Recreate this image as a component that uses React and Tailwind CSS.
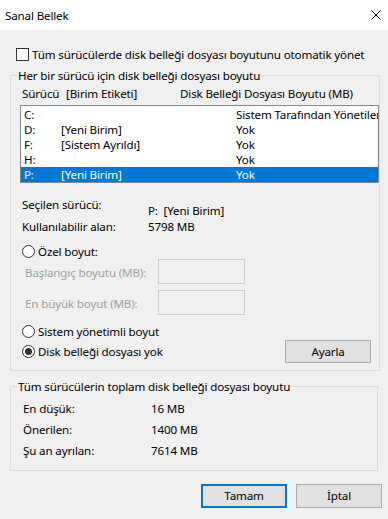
import React, { useState } from "react";

const drives = [
    { letter: "C:", label: "", size: "Sistem Tarafından Yönetilen" },
    { letter: "D:", label: "[Yeni Birim]", size: "Yok" },
    { letter: "F:", label: "[Sistem Ayrıldı]", size: "Yok" },
    { letter: "H:", label: "", size: "Yok" },
    { letter: "P:", label: "[Yeni Birim]", size: "Yok" },
];

const Radio = ({ checked, label, onClick }) => (
    <label className="flex items-center h-[15px] cursor-default" onClick={onClick}>
        <span className="w-[13px] h-[13px] rounded-full border border-[#333333] bg-white flex items-center justify-center shrink-0">
            {checked && <span className="w-[7px] h-[7px] rounded-full bg-[#333333]" />}
        </span>
        <span className="ml-[3px]">{label}</span>
    </label>
);

export default function App() {
    const [selected, setSelected] = useState(4);
    const [mode, setMode] = useState("none");
    const [auto, setAuto] = useState(false);

    return (
        <div className="w-[388px] h-[519px] bg-[#f0f0f0] flex flex-col text-[11.6px] tracking-[-0.15px] leading-[15px] text-black overflow-hidden [font-family:'Noto_Sans',sans-serif]">
            {/* Title bar */}
            <div className="h-[30px] bg-white flex items-center justify-between pl-[5px] pr-[7px] shrink-0">
                <span>Sanal Bellek</span>
                <svg width="10" height="10" viewBox="0 0 10 10" className="shrink-0">
                    <path d="M0.5 0.5 L9.5 9.5 M9.5 0.5 L0.5 9.5" stroke="#000" strokeWidth="1" />
                </svg>
            </div>

            <div className="px-[10px]">
                {/* Auto manage */}
                <label className="mt-[17px] ml-[6px] h-[15px] flex items-center" onClick={() => setAuto(!auto)}>
                    <span className="w-[13px] h-[13px] border border-[#333333] bg-white shrink-0" />
                    <span className="ml-[3px] whitespace-nowrap">Tüm sürücülerde disk belleği dosyası boyutunu otomatik yönet</span>
                </label>

                {/* Per drive */}
                <fieldset className="mt-[6px] border border-[#dcdcdc] pb-[7px]">
                    <legend className="ml-[6px] px-[1px] h-[15px]">Her bir sürücü için disk belleği dosyası boyutu</legend>

                    <div className="mt-[3px] h-[15px] flex whitespace-nowrap">
                        <span className="ml-[11px] w-[44px]">Sürücü</span>
                        <span className="w-[114px]">[Birim Etiketi]</span>
                        <span>Disk Belleği Dosyası Boyutu (MB)</span>
                    </div>

                    <div className="mt-[4px] ml-[9px] w-[359px] h-[78px] border border-[#828790] bg-white pt-[1px] overflow-hidden">
                        {drives.map((d, i) => (
                            <div
                                key={d.letter}
                                onClick={() => setSelected(i)}
                                className={`h-[15px] flex whitespace-nowrap overflow-hidden ${i === selected ? "bg-[#0078d7] text-white" : ""}`}
                            >
                                <span className="pl-[3px] w-[40px] shrink-0">{d.letter}</span>
                                <span className="w-[175px] shrink-0">{d.label}</span>
                                <span>{d.size}</span>
                            </div>
                        ))}
                    </div>

                    {/* Selected drive info */}
                    <div className="mt-[14px] h-[22px] flex items-start whitespace-nowrap">
                        <span className="ml-[11px] w-[126px]">Seçilen sürücü:</span>
                        <span className="mt-[6px]">P:&nbsp; [Yeni Birim]</span>
                    </div>
                    <div className="h-[15px] flex whitespace-nowrap">
                        <span className="ml-[11px] w-[126px]">Kullanılabilir alan:</span>
                        <span>5798 MB</span>
                    </div>

                    <div className="mt-[10px] ml-[11px]">
                        <Radio checked={mode === "custom"} label="Özel boyut:" onClick={() => setMode("custom")} />
                    </div>

                    <div className="h-[25px] flex items-center text-[#a0a0a0]">
                        <span className="ml-[14px] w-[133px] pt-[2px]">Başlangıç boyutu (MB):</span>
                        <span className="w-[87px] h-[25px] border border-[#cccccc] bg-[#f0f0f0]" />
                    </div>
                    <div className="mt-[6px] h-[25px] flex items-center text-[#a0a0a0]">
                        <span className="ml-[14px] w-[133px] pt-[2px]">En büyük boyut (MB):</span>
                        <span className="w-[87px] h-[25px] border border-[#cccccc] bg-[#f0f0f0]" />
                    </div>

                    <div className="mt-[9px] ml-[11px]">
                        <Radio checked={mode === "system"} label="Sistem yönetimli boyut" onClick={() => setMode("system")} />
                    </div>

                    <div className="mt-[1px] h-[23px] flex items-center justify-between">
                        <div className="ml-[11px]">
                            <Radio checked={mode === "none"} label="Disk belleği dosyası yok" onClick={() => setMode("none")} />
                        </div>
                        <button className="mr-[8px] w-[86px] h-[23px] bg-[#e1e1e1] border border-[#adadad] leading-none">
                            Ayarla
                        </button>
                    </div>
                </fieldset>

                {/* Totals */}
                <fieldset className="mt-[8px] border border-[#dcdcdc] pb-[12px]">
                    <legend className="ml-[6px] px-[1px] h-[15px]">Tüm sürücülerin toplam disk belleği dosyası boyutu</legend>
                    <div className="mt-[7px] flex flex-col gap-[6px]">
                        {[
                            ["En düşük:", "16 MB"],
                            ["Önerilen:", "1400 MB"],
                            ["Şu an ayrılan:", "7614 MB"],
                        ].map(([k, v]) => (
                            <div key={k} className="h-[15px] flex whitespace-nowrap">
                                <span className="ml-[12px] w-[128px]">{k}</span>
                                <span>{v}</span>
                            </div>
                        ))}
                    </div>
                </fieldset>
            </div>

            {/* Footer buttons */}
            <div className="mt-[13px] pr-[6px] flex justify-end gap-[9px]">
                <button className="w-[86px] h-[24px] bg-[#e1e1e1] border-2 border-[#0078d7] leading-none">Tamam</button>
                <button className="w-[86px] h-[24px] bg-[#e1e1e1] border border-[#adadad] leading-none">İptal</button>
            </div>
        </div>
    );
}
